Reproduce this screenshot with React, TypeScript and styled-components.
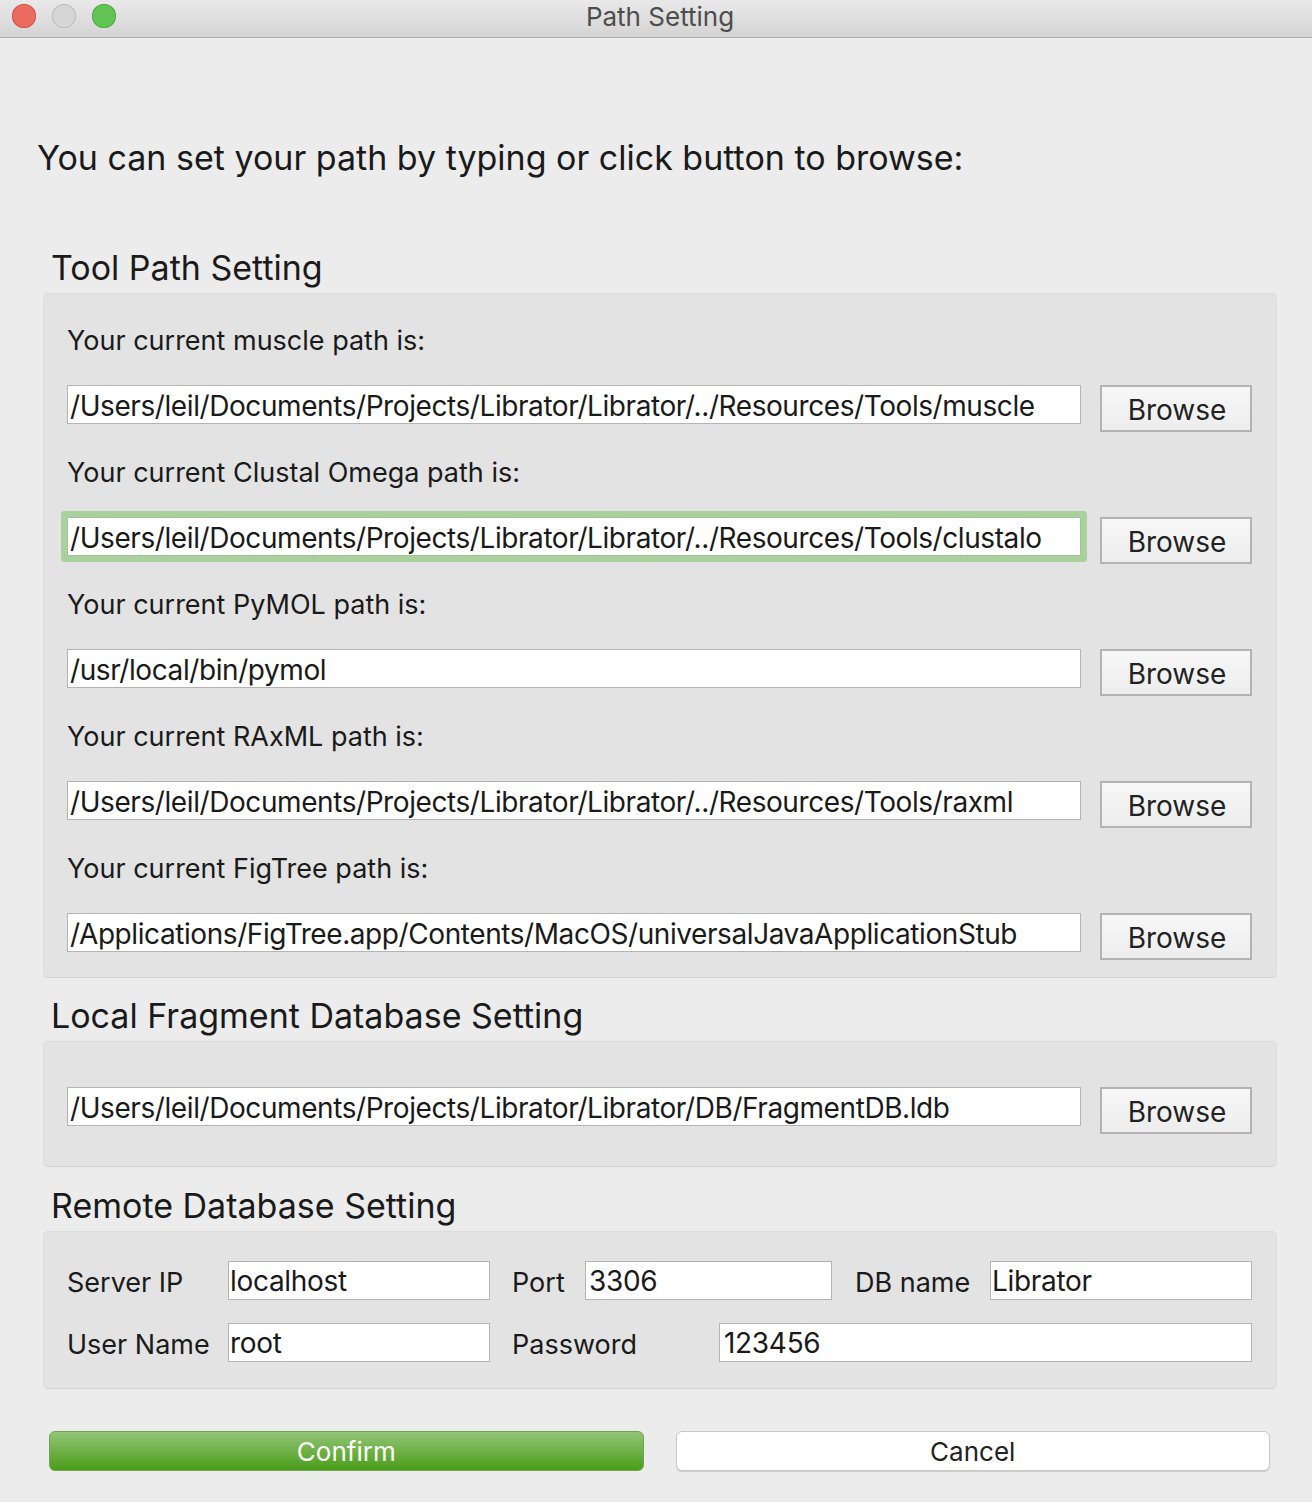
import React from 'react';
import styled, { createGlobalStyle } from 'styled-components';

const GlobalStyle = createGlobalStyle`
  html, body {
    margin: 0;
    padding: 0;
    background: #ececec;
  }
  body {
    font-family: Inter, "Noto Sans", "Liberation Sans", sans-serif;
    color: #1a1a1a;
  }
`;

const Window = styled.div`
  width: 1312px;
  height: 1502px;
  background: #ececec;
  display: flex;
  flex-direction: column;
  overflow: hidden;
`;

const TitleBar = styled.div`
  height: 37px;
  flex-shrink: 0;
  display: flex;
  align-items: flex-start;
  position: relative;
  background: linear-gradient(#e9e9e9, #d4d4d4);
  border-bottom: 1px solid #b0b0b0;
`;

const Lights = styled.div`
  display: flex;
  gap: 16px;
  padding: 4px 0 0 12px;
`;

const Light = styled.span<{ color: string; edge: string }>`
  width: 24px;
  height: 24px;
  border-radius: 50%;
  background: ${p => p.color};
  box-shadow: inset 0 0 0 1px ${p => p.edge};
`;

const Title = styled.div`
  position: absolute;
  top: 0;
  left: 8px;
  right: 0;
  text-align: center;
  font-size: 26px;
  line-height: 33px;
  color: #4d4d4d;
`;

const Body = styled.div`
  display: flex;
  flex-direction: column;
  padding: 100px 35px 0 43px;
`;

const Intro = styled.div`
  font-size: 34px;
  line-height: 40px;
  margin-left: -6px;
  margin-bottom: 70px;
`;

const SectionTitle = styled.div`
  font-size: 34px;
  line-height: 40px;
  margin-left: 8px;
  margin-bottom: 5px;
`;

const Group = styled.div<{ pt: number; pb: number; mb: number }>`
  background: #e3e3e3;
  border: 1px solid #dddddd;
  border-bottom-color: #d2d2d2;
  border-radius: 5px;
  padding: ${p => p.pt}px 24px ${p => p.pb}px 23px;
  margin-bottom: ${p => p.mb}px;
  display: flex;
  flex-direction: column;
`;

const PathBlock = styled.div`
  display: flex;
  flex-direction: column;
  & + & {
    margin-top: 25px;
  }
`;

const Label = styled.div`
  font-size: 27px;
  line-height: 32px;
  height: 32px;
  margin-bottom: 28px;
`;

const PathRow = styled.div`
  display: flex;
  align-items: flex-start;
  gap: 19px;
`;

const Field = styled.div<{ focused?: boolean }>`
  flex: 1;
  height: 39px;
  box-sizing: border-box;
  background: #fff;
  border: 1px solid #b4b4b4;
  font-size: 28px;
  letter-spacing: -0.42px;
  line-height: 37px;
  padding: 2px 0 0 2px;
  white-space: nowrap;
  overflow: hidden;
  ${p => p.focused && `
    border-color: #9fc594;
    box-shadow: 0 0 0 6px #a9d09d;
    border-radius: 1px;
  `}
`;

const BrowseButton = styled.button`
  width: 152px;
  height: 47px;
  flex-shrink: 0;
  box-sizing: border-box;
  border: 2px solid #b3b3b3;
  background: linear-gradient(#f7f7f7, #ededed);
  font-family: inherit;
  font-size: 28px;
  color: #222;
  padding: 3px 0 0 2px;
  line-height: 40px;
`;

const FormRow = styled.div`
  display: flex;
  align-items: center;
  height: 39px;
  & + & {
    margin-top: 23px;
  }
`;

const FormLabel = styled.div<{ w: number }>`
  width: ${p => p.w}px;
  flex-shrink: 0;
  font-size: 27px;
  line-height: 39px;
  padding-top: 4px;
`;

const FormField = styled.div<{ w?: number; gapAfter?: number; indent?: number }>`
  ${p => (p.w ? `width: ${p.w}px; flex-shrink: 0;` : 'flex: 1;')}
  margin-right: ${p => p.gapAfter ?? 0}px;
  height: 39px;
  box-sizing: border-box;
  background: #fff;
  border: 1px solid #b4b4b4;
  font-size: 28px;
  letter-spacing: -0.3px;
  line-height: 37px;
  padding: 1px 0 0 ${p => p.indent ?? 1}px;
  white-space: nowrap;
  overflow: hidden;
`;

const Actions = styled.div`
  display: flex;
  gap: 32px;
  margin: 42px 7px 0 6px;
`;

const ActionButton = styled.button<{ primary?: boolean }>`
  flex: 1;
  height: 40px;
  border-radius: 6px;
  font-family: inherit;
  font-size: 26px;
  padding: 0;
  ${p =>
    p.primary
      ? `
    color: #fff;
    border: 1px solid #6fa552;
    background: linear-gradient(#93c577, #4a9d19);
  `
      : `
    color: #222;
    border: 1px solid #c9c9c9;
    background: #fff;
    box-shadow: 0 1px 1px rgba(0,0,0,0.15);
  `}
`;

const tools = [
  { name: 'muscle', path: '/Users/leil/Documents/Projects/Librator/Librator/../Resources/Tools/muscle' },
  { name: 'Clustal Omega', path: '/Users/leil/Documents/Projects/Librator/Librator/../Resources/Tools/clustalo', focused: true },
  { name: 'PyMOL', path: '/usr/local/bin/pymol' },
  { name: 'RAxML', path: '/Users/leil/Documents/Projects/Librator/Librator/../Resources/Tools/raxml' },
  { name: 'FigTree', path: '/Applications/FigTree.app/Contents/MacOS/universalJavaApplicationStub' },
];

const App: React.FC = () => {
  return (
    <Window>
      <GlobalStyle />
      <TitleBar>
        <Lights>
          <Light color="#ec6a5e" edge="#d4534a" />
          <Light color="#d6d6d6" edge="#bdbdbd" />
          <Light color="#61c454" edge="#4fa940" />
        </Lights>
        <Title>Path Setting</Title>
      </TitleBar>

      <Body>
        <Intro>You can set your path by typing or click button to browse:</Intro>

        <SectionTitle>Tool Path Setting</SectionTitle>
        <Group pt={31} pb={17} mb={18}>
          {tools.map(t => (
            <PathBlock key={t.name}>
              <Label>Your current {t.name} path is:</Label>
              <PathRow>
                <Field focused={t.focused}>{t.path}</Field>
                <BrowseButton>Browse</BrowseButton>
              </PathRow>
            </PathBlock>
          ))}
        </Group>

        <SectionTitle>Local Fragment Database Setting</SectionTitle>
        <Group pt={45} pb={32} mb={19}>
          <PathRow>
            <Field>/Users/leil/Documents/Projects/Librator/Librator/DB/FragmentDB.ldb</Field>
            <BrowseButton>Browse</BrowseButton>
          </PathRow>
        </Group>

        <SectionTitle>Remote Database Setting</SectionTitle>
        <Group pt={29} pb={26} mb={0}>
          <FormRow>
            <FormLabel w={161}>Server IP</FormLabel>
            <FormField w={262} gapAfter={22}>localhost</FormField>
            <FormLabel w={73}>Port</FormLabel>
            <FormField w={247} gapAfter={23} indent={3}>3306</FormField>
            <FormLabel w={135}>DB name</FormLabel>
            <FormField>Librator</FormField>
          </FormRow>
          <FormRow>
            <FormLabel w={161}>User Name</FormLabel>
            <FormField w={262} gapAfter={22}>root</FormField>
            <FormLabel w={207}>Password</FormLabel>
            <FormField indent={4}>123456</FormField>
          </FormRow>
        </Group>

        <Actions>
          <ActionButton primary>Confirm</ActionButton>
          <ActionButton>Cancel</ActionButton>
        </Actions>
      </Body>
    </Window>
  );
};

export default App;
